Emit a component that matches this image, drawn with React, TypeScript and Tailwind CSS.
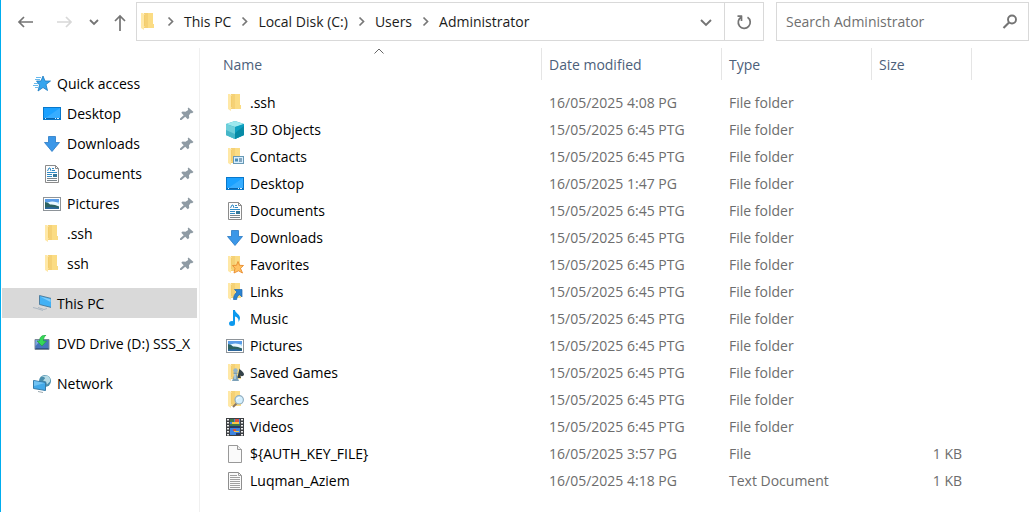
import React from "react";

function Svg({ children, className = "h-[18px] w-[18px]", box = "0 0 18 18" }: { children: React.ReactNode; className?: string; box?: string }) {
  return (
    <svg viewBox={box} className={`shrink-0 ${className}`} fill="none" aria-hidden="true">
      {children}
    </svg>
  );
}

const folderShape = (
  <>
    <path d="M5 0h9v11h1v4H5z" fill="#f5d176" />
    <path d="M9 0h5v11h1v4H9z" fill="#fbdc84" />
    <path d="M2 0h2l2 2v11l-1 1v3l-3-2z" fill="#ffe8a6" />
    <path d="M5.500 2v11" stroke="#f3cd6c" />
  </>
);

const downShape = (
  <path d="M5.500 1.500h7v6h4L9 16.500 1.500 7.500h4z" fill="#3b97e8" stroke="#2878c4" strokeWidth="0.800" />
);

const icons: Record<string, React.ReactNode> = {
  folder: <Svg>{folderShape}</Svg>,
  objects: (
    <Svg>
      <path d="M0 3L9 0l9 3v11l-9 4-9-4z" fill="#29aec4" />
      <path d="M0 3L9 0l9 3-9 3z" fill="#9ce8ee" />
      <path d="M0 3l9 3v12l-9-4z" fill="#6fcfda" />
      <path d="M0 9l9 4v5l-9-4z" fill="#45b6c8" />
      <path d="M9 6l9-3v11l-9 4z" fill="#0d9fc0" />
      <path d="M9 12l9-7v9l-9 4z" fill="#078ba6" />
    </Svg>
  ),
  contacts: (
    <Svg>
      {folderShape}
      <rect x="7.500" y="8.500" width="10" height="7" fill="#d9efff" stroke="#6899b5" />
      <path d="M9 10.500h3v3H9z" fill="#4a8db7" />
      <path d="M13 11h3M13 13h3" stroke="#315f80" />
    </Svg>
  ),
  desktop: (
    <Svg>
      <rect x="0.500" y="2.500" width="17" height="12" fill="#1ba1ff" stroke="#0878cb" />
      <path d="M1 14L17 3v11z" fill="#37adff" />
      <path d="M1 13.500h16" stroke="#0b65ad" />
      <path d="M2 13.500h1M12 13.500h1M14 13.500h2" stroke="#d8f0ff" />
    </Svg>
  ),
  documents: (
    <Svg>
      <path d="M2.500 0.500h10l3 3v14h-13z" fill="#fdfdfd" stroke="#8b8b8b" />
      <path d="M12.500 0.500v3h3" stroke="#8b8b8b" />
      <path d="M4.500 6L6 3h1l1 3M9 3.500h2M9 5.500h3M4 7.500h10M4 9.500h5M4 11.500h5" stroke="#318bc5" />
      <path d="M10 9h4v3h-4z" fill="#347799" />
      <path d="M4 13.500h10M4 15.500h10" stroke="#7b858b" />
    </Svg>
  ),
  downloads: <Svg>{downShape}</Svg>,
  favorites: (
    <Svg>
      {folderShape}
      <path d="M12 5.500l1.500 3.800 4 .2-3 2.800 2 4.700-4-2.200L8 17l1-4.700-2.500-2.800 4-.2z" fill="#ffc263" stroke="#e98b2e" strokeWidth="0.900" />
    </Svg>
  ),
  links: (
    <Svg>
      {folderShape}
      <path d="M8.500 6.500H16V14l-2.300-2.300c-2 1-3 2.500-3 4.800H7.500c0-3 1-5.500 3.500-7.500z" fill="#2b83d1" stroke="#1f65aa" strokeWidth="0.700" />
    </Svg>
  ),
  music: (
    <Svg>
      <ellipse cx="6" cy="13.500" rx="3" ry="2.500" fill="#0c99ee" />
      <path d="M7 0h2c0 3 5 4 5 8q0 2-1.500 4C13 8.500 11 7 9 6.500v7H7z" fill="#0c99ee" />
    </Svg>
  ),
  pictures: (
    <Svg>
      <rect x="0.500" y="2.500" width="17" height="13" fill="#fff" stroke="#8e9499" />
      <rect x="2" y="4" width="14" height="10" fill="#9bd0f5" />
      <path d="M2 4h14v3H2z" fill="#5b9de8" />
      <path d="M5 7.500Q11 5 16 9v2H8z" fill="#eaf7ff" />
      <path d="M2 7q3 0 5 2.500 4-.5 9 2V14H2z" fill="#2d6260" />
      <path d="M2 12.500q7-1 14 .5v1H2z" fill="#2c679c" />
    </Svg>
  ),
  games: (
    <Svg>
      {folderShape}
      <path d="M13.500 4.500c1 2 4.500 3.500 4.500 5.700 0 2-2.500 2.500-3.700 1.300L15 14h-4l1-3z" fill="#344249" />
      <circle cx="9.500" cy="6.500" r="2.200" fill="#94b6cc" />
      <path d="M7.500 8.500h4v1.500h-1l1.500 4.500 1 2.500H6l1-2.500L8.500 10h-1z" fill="#7ba0b8" />
      <path d="M9 10v5" stroke="#d9edf8" />
    </Svg>
  ),
  searches: (
    <Svg>
      {folderShape}
      <path d="M7 16l3.500-3.500" stroke="#8b7760" strokeWidth="2" />
      <circle cx="13.200" cy="8.800" r="4.200" fill="#d5f0ff" stroke="#91aec0" strokeWidth="1.200" />
      <path d="M10.500 8.500q1-2 3-2" stroke="#fff" />
    </Svg>
  ),
  videos: (
    <Svg>
      <path d="M0 0h18v18H0z" fill="#3c3f42" />
      <path d="M2 1v17M16 1v17" stroke="#f0f0f0" strokeWidth="2" strokeDasharray="1.500 1.500" />
      <path d="M4 1h10v7H4zM4 10h10v7H4z" fill="#3e83df" />
      <path d="M4 1h4v3H4zM4 6h10v2H4z" fill="#3f7b48" />
      <path d="M9 1h4v3H9zM7 11h3v2H7z" fill="#d95342" />
      <path d="M6 4h7v2H6zM8 13h5v1H8z" fill="#f3c746" />
      <path d="M4 8h10v2H4zM10 15h4v2h-4z" fill="#263b68" />
    </Svg>
  ),
  file: (
    <Svg>
      <path d="M2.500 0.500h9l4 4v13h-13z" fill="#fafafa" stroke="#999" />
      <path d="M11.500 0.500v4h4" fill="#eee" stroke="#999" />
    </Svg>
  ),
  text: (
    <Svg>
      <path d="M2.500 0.500h10l3 3v14h-13z" fill="#fafafa" stroke="#8e8e8e" />
      <path d="M12.500 0.500v3h3M4 3.500h7M4 5.500h10M4 7.500h10M4 9.500h10M4 11.500h10M4 13.500h10M4 15.500h10" stroke="#a0a0a0" />
    </Svg>
  ),
  star: (
    <Svg>
      <path d="M10 1l2 5h5.500L13 9.500l1.500 6-4.500-3-5 3.500 1.500-6L3.500 6H8z" fill="#36a5ee" stroke="#1978bf" strokeWidth="0.800" />
      <path d="M3 2.500h5M2 4.500h5M1 8.500h4M0 10.500h5M2 12.500h3" stroke="#68b9ec" />
    </Svg>
  ),
  pc: (
    <Svg>
      <path d="M6.500 0.500l12 3v9l-12-3z" fill="#42b1f5" stroke="#3f6e91" strokeWidth="0.800" />
      <path d="M7 1.500l10.500 2.800V7z" fill="#80cdfb" />
      <path d="M0 12.500l4 1 6 2M5 12.500l6 2 3-1" stroke="#abb7c2" />
    </Svg>
  ),
  dvd: (
    <Svg>
      <path d="M2 4.500h14v10H2z" fill="#4775ba" stroke="#7b8798" />
      <path d="M2.500 5H8l-5.500 6z" fill="#7da6de" />
      <path d="M2.500 13.500h13" stroke="#315588" />
      <path d="M13 0C9 0 6.500 2 6.500 6H4l5 5 4.500-5H10.500c0-2.500.500-4 2.500-6z" fill="#35d856" stroke="#209c41" strokeWidth="0.600" />
    </Svg>
  ),
  network: (
    <Svg>
      <circle cx="12" cy="6" r="6" fill="#4a8eac" />
      <path d="M8 1.500q4 0 4 2l-2 2 3 1 1 3 3-3q1-5-4-6z" fill="#b6dbe6" />
      <path d="M0.500 5.500l12 2v8l-12-2z" fill="#42a9e9" stroke="#357ba8" />
      <path d="M1 6l11 2-11 3z" fill="#71c3f3" />
      <path d="M5 16.500l5 1" stroke="#9ba8b0" />
    </Svg>
  ),
};

function Pin() {
  return (
    <Svg className="h-[14px] w-[14px]" box="0 0 14 14">
      <path d="M8.500 0.500l5 4.500-1.500 1.200-1.200-.2L9 8.200l.2 2.800-1.500 1.200-2.500-2.400L1.500 13H0v-1.500l3.700-3.300-2.400-2.400L2.500 4.500l3 .2L8.200 3l-.500-1.500z" fill="#8f9ba4" />
    </Svg>
  );
}

function Chevron() {
  return (
    <Svg className="h-3 w-[27px]" box="0 0 27 12">
      <path d="M11.500 1.500l4 4-4 4" stroke="#777" strokeWidth="1.700" />
    </Svg>
  );
}

const DownChevron = () => (
  <Svg className="h-3 w-3" box="0 0 12 12">
    <path d="M1 4l5 5 5-5" stroke="#747474" strokeWidth="1.900" />
  </Svg>
);

const quickItems = [
  ["Desktop", "desktop"],
  ["Downloads", "downloads"],
  ["Documents", "documents"],
  ["Pictures", "pictures"],
  [".ssh", "folder"],
  ["ssh", "folder"],
];

const afternoon = "15/05/2025 6:45 PTG";
const files = [
  [".ssh", "folder", "16/05/2025 4:08 PG", "File folder", ""],
  ["3D Objects", "objects", afternoon, "File folder", ""],
  ["Contacts", "contacts", afternoon, "File folder", ""],
  ["Desktop", "desktop", "16/05/2025 1:47 PG", "File folder", ""],
  ["Documents", "documents", afternoon, "File folder", ""],
  ["Downloads", "downloads", afternoon, "File folder", ""],
  ["Favorites", "favorites", afternoon, "File folder", ""],
  ["Links", "links", afternoon, "File folder", ""],
  ["Music", "music", afternoon, "File folder", ""],
  ["Pictures", "pictures", afternoon, "File folder", ""],
  ["Saved Games", "games", afternoon, "File folder", ""],
  ["Searches", "searches", afternoon, "File folder", ""],
  ["Videos", "videos", afternoon, "File folder", ""],
  ["${AUTH_KEY_FILE}", "file", "16/05/2025 3:57 PG", "File", "1 KB"],
  ["Luqman_Aziem", "text", "16/05/2025 4:18 PG", "Text Document", "1 KB"],
];

const crumbs = ["This PC", "Local Disk (C:)", "Users", "Administrator"];

function Toolbar() {
  return (
    <header className="flex h-12 items-start pt-0.5">
      <nav aria-label="History" className="flex h-10 w-[135px] shrink-0 items-center pl-4">
        <button aria-label="Back" className="w-[38px]">
          <Svg className="h-4 w-[18px]" box="0 0 18 16">
            <path d="M16 8H2M7 3L2 8l5 5" stroke="#747474" strokeWidth="1.700" />
          </Svg>
        </button>
        <button aria-label="Forward" disabled className="w-[33px]">
          <Svg className="h-4 w-[18px]" box="0 0 18 16">
            <path d="M2 8h14M11 3l5 5-5 5" stroke="#d8d8d8" strokeWidth="1.700" />
          </Svg>
        </button>
        <button aria-label="Recent locations" className="w-[26px]">
          <Svg className="h-3 w-3" box="0 0 12 12">
            <path d="M2 4l4 4 4-4" stroke="#747474" strokeWidth="1.800" />
          </Svg>
        </button>
        <button aria-label="Up" className="pt-0.5">
          <Svg className="h-[18px] w-3" box="0 0 12 18">
            <path d="M6 17V2M1 7l5-5 5 5" stroke="#747474" strokeWidth="1.700" />
          </Svg>
        </button>
      </nav>
      <div className="flex h-[39px] min-w-0 grow items-center border border-[#d9d9d9] pl-0.5">
        {icons.folder}
        <nav aria-label="Address" className="flex min-w-0 grow items-center whitespace-nowrap text-[#1b1b1b]">
          {crumbs.map((name, i) => (
            <React.Fragment key={name}>
              <Chevron />
              <a href={`#path-${i}`}>{name}</a>
            </React.Fragment>
          ))}
        </nav>
        <button aria-label="Previous locations" className="flex h-full w-9 items-center justify-center">
          <DownChevron />
        </button>
        <button aria-label="Refresh" className="flex h-full w-[39px] items-center justify-center border-l border-[#d9d9d9]">
          <Svg className="h-4 w-4" box="0 0 16 16">
            <path d="M11.500 3.300A6 6 0 1 1 5.500 3V7M1.500 2.200h4.500" stroke="#747474" strokeWidth="1.700" />
          </Svg>
        </button>
      </div>
      <label className="ml-3 flex h-[39px] w-[253px] shrink-0 items-center border border-[#d9d9d9] pr-2.5 pl-[9px]">
        <input aria-label="Search Administrator" placeholder="Search Administrator" className="min-w-0 grow text-[#333] outline-none placeholder:text-[#6f6f6f]" />
        <Svg className="h-4 w-4" box="0 0 16 16">
          <circle cx="10" cy="5.500" r="4" stroke="#747474" strokeWidth="1.900" />
          <path d="M7 8.500L1.500 14" stroke="#747474" strokeWidth="2.200" />
        </Svg>
      </label>
    </header>
  );
}

function Sidebar() {
  return (
    <nav aria-label="Folders" className="w-[199px] shrink-0 border-r border-[#f0f0f0] pt-5 pr-0.5 pl-px text-black">
      <a href="#quick" className="flex h-[30px] items-center gap-[6px] pt-0.5 pl-[31px]">
        {icons.star}Quick access
      </a>
      {quickItems.map(([name, icon]) => (
        <a key={name} href={`#${name}`} className="flex h-[30px] items-center gap-[6px] pt-0.5 pr-[3px] pl-[41px]">
          {icons[icon]}
          <span className="grow">{name}</span>
          <Pin />
        </a>
      ))}
      <div className="mt-2.5 flex flex-col gap-2.5">
        <a href="#pc" aria-current="page" className="flex h-[30px] items-center gap-[6px] bg-[#d9d9d9] pt-0.5 pl-[31px]">
          {icons.pc}This PC
        </a>
        <a href="#dvd" className="flex h-[30px] items-center gap-[6px] overflow-hidden pt-0.5 pl-[31px] whitespace-nowrap">
          {icons.dvd}DVD Drive (D:) SSS_X
        </a>
        <a href="#network" className="flex h-[30px] items-center gap-[6px] pt-0.5 pl-[31px]">
          {icons.network}Network
        </a>
      </div>
    </nav>
  );
}

function FileTable() {
  const head = "h-[41px] p-0 align-top font-normal";
  const cell = "flex h-8 items-center border-r border-[#e5e5e5] pt-0.5 pl-[7px]";
  return (
    <main className="min-w-0 grow">
      <table className="w-full table-fixed border-collapse text-left whitespace-nowrap">
        <colgroup>
          <col className="w-[342px]" />
          <col className="w-[180px]" />
          <col className="w-[150px]" />
          <col className="w-[100px]" />
          <col />
        </colgroup>
        <thead className="text-[#4c607a]">
          <tr>
            <th scope="col" aria-sort="ascending" className={head}>
              <div className="relative ml-4 flex h-8 items-center border-r border-[#e5e5e5] pt-0.5 pl-[7px]">
                Name
                <svg viewBox="0 0 10 6" className="absolute top-0 left-1/2 h-[6px] w-2.5 -translate-x-1/2" fill="none" aria-hidden="true">
                  <path d="M0.500 5.500L5 1l4.500 4.500" stroke="#666" />
                </svg>
              </div>
            </th>
            <th scope="col" className={head}><div className={cell}>Date modified</div></th>
            <th scope="col" className={head}><div className={cell}>Type</div></th>
            <th scope="col" className={head}><div className={cell}>Size</div></th>
            <td />
          </tr>
        </thead>
        <tbody className="text-[#6d6d6d]">
          {files.map(([name, icon, date, type, size]) => (
            <tr key={name} className="h-[27px]">
              <td className="p-0 pl-[26px] text-black">
                <a href={`#${name}`} className="flex items-center gap-[6px]">
                  {icons[icon]}
                  {name}
                </a>
              </td>
              <td className="p-0 pl-[7px]">{date}</td>
              <td className="p-0 pl-[7px]">{type}</td>
              <td className="p-0 pr-2.5 text-right">{size}</td>
              <td />
            </tr>
          ))}
        </tbody>
      </table>
    </main>
  );
}

export default function App() {
  return (
    <div className="flex min-h-screen flex-col border-l border-[#00adef] bg-white font-['Open_Sans','Noto_Sans',sans-serif] text-[14px] leading-5">
      <Toolbar />
      <div className="flex grow">
        <Sidebar />
        <FileTable />
      </div>
    </div>
  );
}
